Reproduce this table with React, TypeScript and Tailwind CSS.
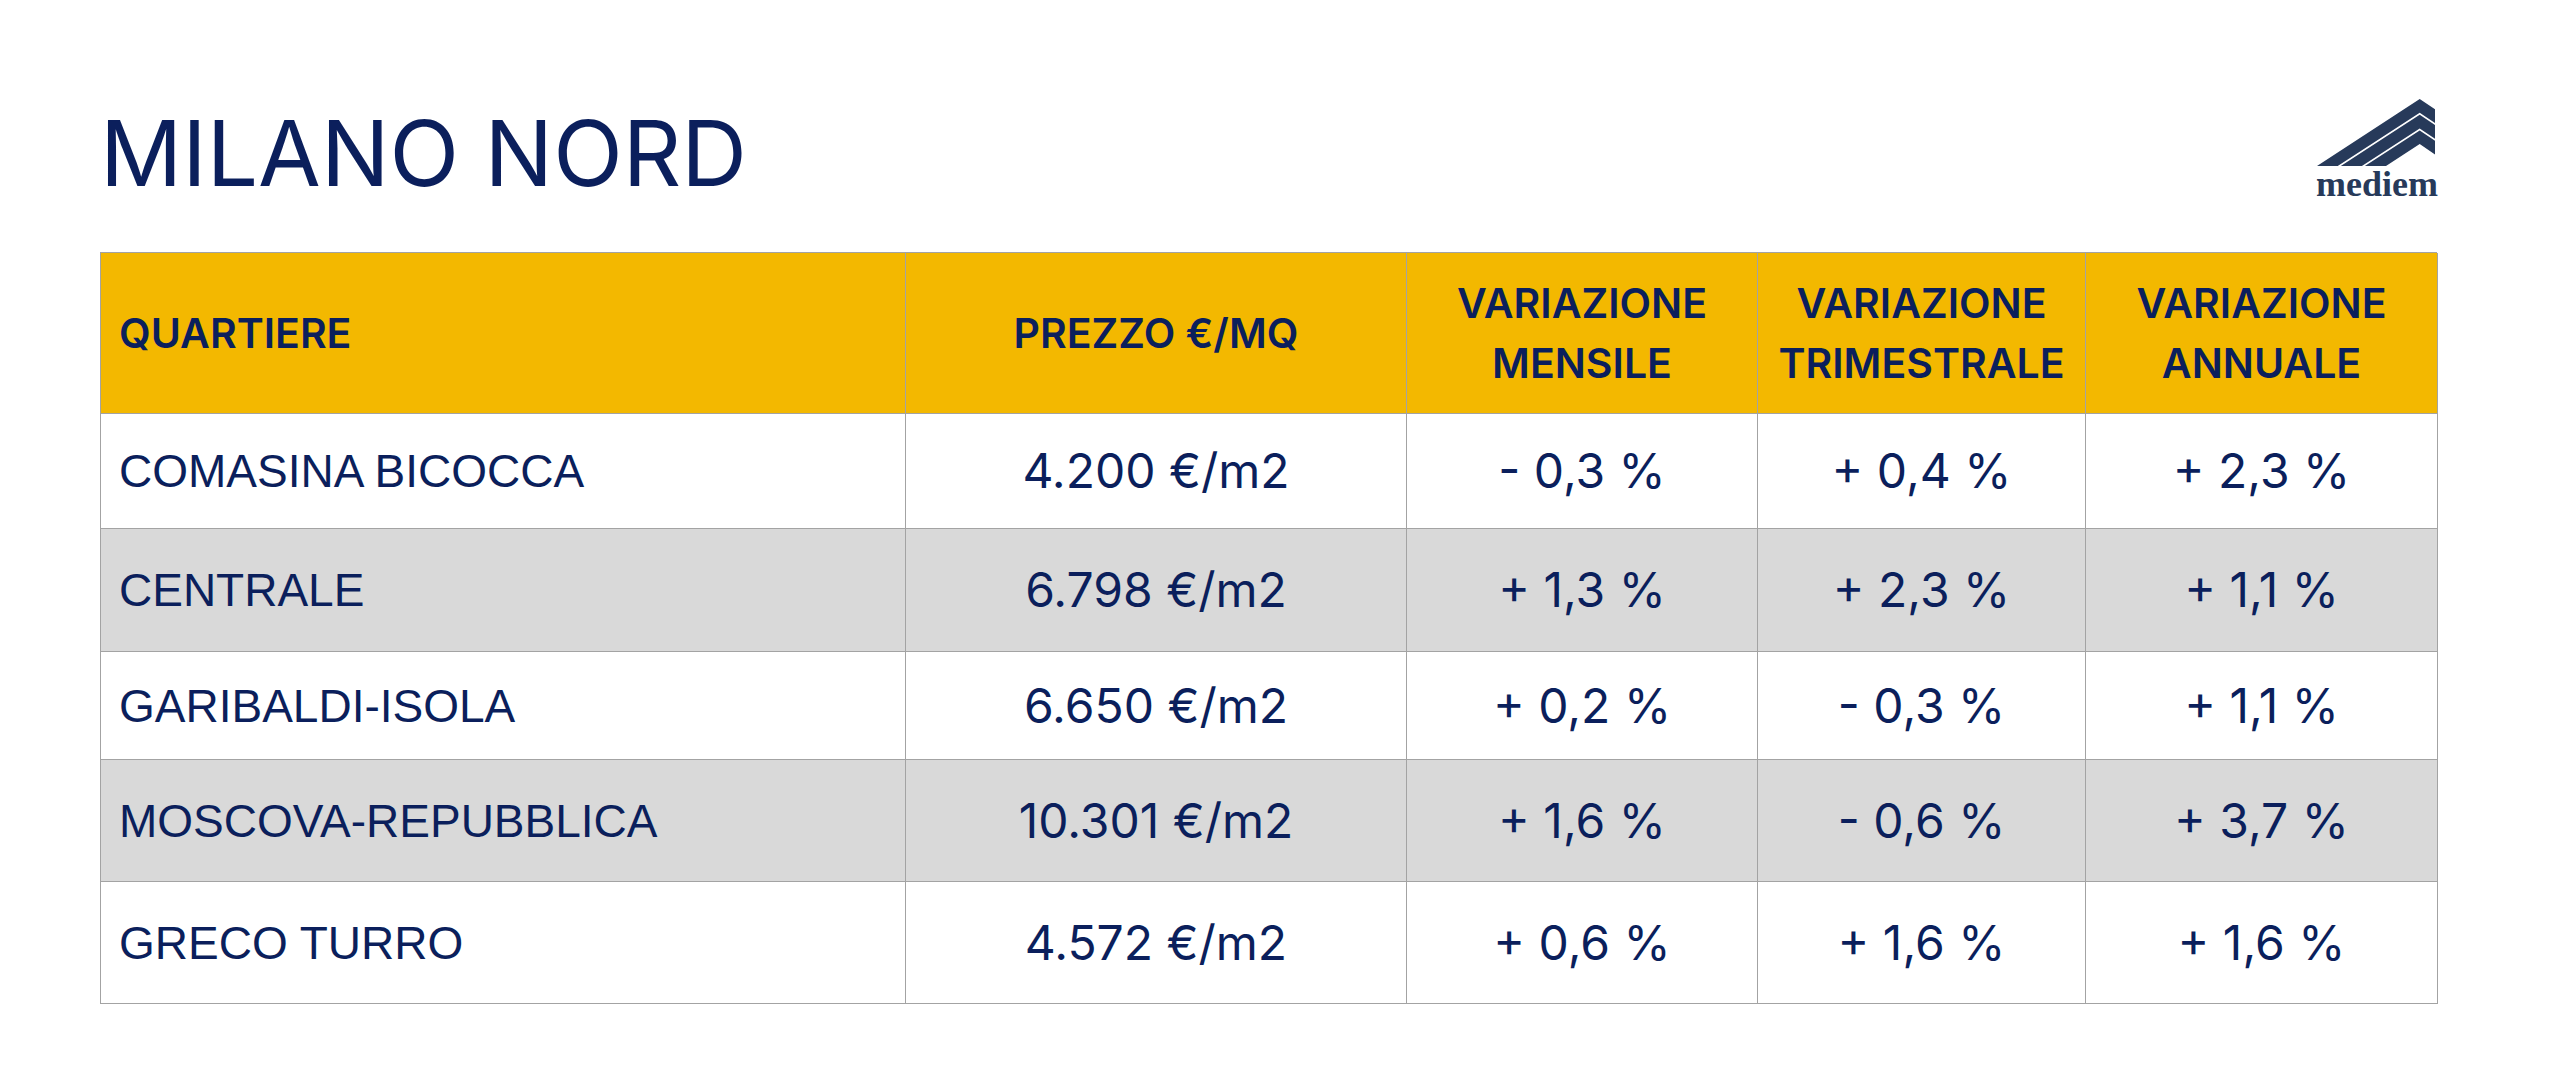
import React from 'react';

const navy = 'text-[#0b1f5c]';

const rows = [
  { name: 'COMASINA BICOCCA', price: '4.200 €/m2', m: '- 0,3 %', t: '+ 0,4 %', a: '+ 2,3 %', h: 'h-[115px]', gray: false },
  { name: 'CENTRALE', price: '6.798 €/m2', m: '+ 1,3 %', t: '+ 2,3 %', a: '+ 1,1 %', h: 'h-[123px]', gray: true },
  { name: 'GARIBALDI-ISOLA', price: '6.650 €/m2', m: '+ 0,2 %', t: '- 0,3 %', a: '+ 1,1 %', h: 'h-[108px]', gray: false },
  { name: 'MOSCOVA-REPUBBLICA', price: '10.301 €/m2', m: '+ 1,6 %', t: '- 0,6 %', a: '+ 3,7 %', h: 'h-[122px]', gray: true },
  { name: 'GRECO TURRO', price: '4.572 €/m2', m: '+ 0,6 %', t: '+ 1,6 %', a: '+ 1,6 %', h: 'h-[122px]', gray: false },
];

const Logo = () => (
  <div className="flex flex-col items-end">
    <svg width="120" height="67" viewBox="0 0 120 67" className="block">
      <polygon fill="#273a5a" points="0,67 102.7,0 118,10.3 118,24 102.7,13.7 20.7,67" />
      <polygon fill="#273a5a" points="23.8,67 102.7,15.7 118,26 118,39.7 102.7,29.4 44.9,67" />
      <polygon fill="#273a5a" points="47.9,67 102.7,31.4 118,41.7 118,55.4 102.7,45.1 69,67" />
    </svg>
    <p className="text-[36px] leading-none font-bold text-[#273a5a] -mr-[1px]" style={{ fontFamily: '"Liberation Serif", serif' }}>
      mediem
    </p>
  </div>
);

const HeadCell = ({ children, left }: { children: React.ReactNode; left?: boolean }) => (
  <div
    className={`flex items-center border-r border-b border-[#a3a3a3] bg-[#f3b800] ${navy} text-[41px] font-semibold leading-[60px] ${left ? 'justify-start pl-[18px]' : 'justify-center text-center'}`}
    style={{ fontFamily: 'Inter, sans-serif' }}
  >
    {children}
  </div>
);

export default function App() {
  return (
    <div className="w-[2560px] h-[1078px] bg-white pl-[100px] pr-[123px] pt-[99px]">
      <div className="flex justify-between items-start h-[153px]">
        <h1 className={`mt-[9px] text-[91px] leading-none font-normal ${navy}`} style={{ fontFamily: 'Inter, sans-serif' }}>
          MILANO NORD
        </h1>
        <Logo />
      </div>
      <div className="grid grid-cols-[805px_501px_351px_328px_352px] border-l border-t border-[#a3a3a3]">
        <div className="contents">
          <div className="h-[161px] grid">
            <HeadCell left>QUARTIERE</HeadCell>
          </div>
          <HeadCell>PREZZO €/MQ</HeadCell>
          <HeadCell>VARIAZIONE<br />MENSILE</HeadCell>
          <HeadCell>VARIAZIONE<br />TRIMESTRALE</HeadCell>
          <HeadCell>VARIAZIONE<br />ANNUALE</HeadCell>
        </div>
        {rows.map((r) => {
          const bg = r.gray ? 'bg-[#d9d9d9]' : 'bg-white';
          const cell = `flex items-center justify-center border-r border-b border-[#a3a3a3] ${bg} ${navy} text-[48px] leading-none`;
          return (
            <div key={r.name} className="contents">
              <div
                className={`${r.h} flex items-center pl-[18px] border-r border-b border-[#a3a3a3] ${bg} ${navy} text-[46px] leading-none`}
                style={{ fontFamily: '"Liberation Sans", Arial, sans-serif' }}
              >
                {r.name}
              </div>
              <div className={cell} style={{ fontFamily: 'Inter, sans-serif' }}>{r.price}</div>
              <div className={cell} style={{ fontFamily: 'Inter, sans-serif' }}>{r.m}</div>
              <div className={cell} style={{ fontFamily: 'Inter, sans-serif' }}>{r.t}</div>
              <div className={cell} style={{ fontFamily: 'Inter, sans-serif' }}>{r.a}</div>
            </div>
          );
        })}
      </div>
    </div>
  );
}
